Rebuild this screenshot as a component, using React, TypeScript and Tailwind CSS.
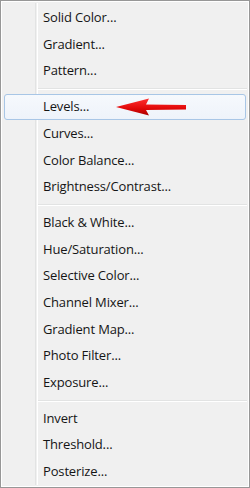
import React from "react";

type Entry = { label: string; active?: boolean } | "sep";

const entries: Entry[] = [
  { label: "Solid Color..." },
  { label: "Gradient..." },
  { label: "Pattern..." },
  "sep",
  { label: "Levels...", active: true },
  { label: "Curves..." },
  { label: "Color Balance..." },
  { label: "Brightness/Contrast..." },
  "sep",
  { label: "Black & White..." },
  { label: "Hue/Saturation..." },
  { label: "Selective Color..." },
  { label: "Channel Mixer..." },
  { label: "Gradient Map..." },
  { label: "Photo Filter..." },
  { label: "Exposure..." },
  "sep",
  { label: "Invert" },
  { label: "Threshold..." },
  { label: "Posterize..." },
];

const Arrow = () => (
  <svg width="74" height="18" viewBox="0 0 74 18" className="absolute left-[113px] top-[4.5px]">
    <defs>
      <linearGradient id="red" x1="0" y1="0" x2="0" y2="1">
        <stop offset="0" stopColor="#ff3030" />
        <stop offset="0.6" stopColor="#e00808" />
        <stop offset="1" stopColor="#a80000" />
      </linearGradient>
    </defs>
    <path d="M2 9 L35 0.5 L32 6.5 L72 7 L72 11.5 L32 12 L35 17.5 Z" fill="url(#red)" />
  </svg>
);

const App = () => {
  return (
    <div className="w-[250px] h-[488px] bg-white">
      <div
        className="relative w-[250px] h-[488px] border border-[#979797] bg-[#f0f0f0] shadow-[inset_1px_1px_0_#fff,inset_-1px_-1px_0_#fff] pt-[3.5px] overflow-hidden"
        style={{ fontFamily: '"Open Sans", "Noto Sans", sans-serif' }}
      >
        <div className="absolute left-[34px] top-[2px] bottom-[2px] w-[2px] border-l border-[#e2e3e3] shadow-[1px_0_0_#fff]" />
        {entries.map((e, i) =>
          e === "sep" ? (
            <div key={i} className="h-[9px] flex items-center pl-[36px] pr-[2px]">
              <div className="w-full h-[2px] border-t border-[#e2e3e3] border-b-white border-b" />
            </div>
          ) : e.active ? (
            <div key={i} className="relative h-[26.7px] px-[3px]">
              <div className="h-full rounded-[3px] border border-[#a8c6e6] bg-gradient-to-b from-[#f6f9fd] to-[#eef3fa] pl-[38px] flex items-center text-[13px] tracking-[-0.15px] text-[#151515]">
                {e.label}
              </div>
              <Arrow />
            </div>
          ) : (
            <div key={i} className="h-[26.7px] pl-[42px] flex items-center text-[13px] tracking-[-0.15px] text-[#151515]">
              {e.label}
            </div>
          )
        )}
      </div>
    </div>
  );
};

export default App;
